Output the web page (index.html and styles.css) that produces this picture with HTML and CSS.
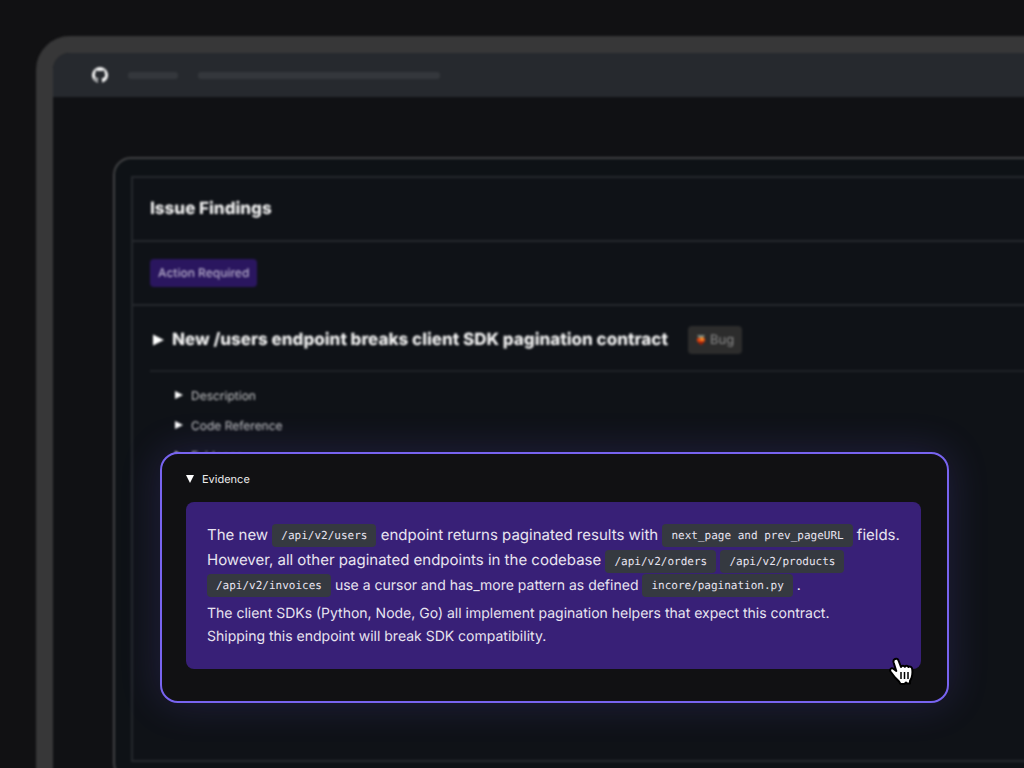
FILE: index.html
```
<!DOCTYPE html>
<html lang="en">
<head>
  <meta charset="UTF-8" />
  <meta name="viewport" content="width=device-width, initial-scale=1.0"/>
  <title>Issue Findings</title>
  <link rel="stylesheet" href="styles.css">
</head>
<body>
  <div class="window">
    <header class="topbar">
      <svg class="logo" viewBox="0 0 16 16" aria-hidden="true">
        <path fill="#f4f4f4" d="M8 0a8 8 0 0 0-2.53 15.59c.4.07.55-.17.55-.38l-.01-1.49c-2.01.37-2.53-.49-2.69-.94-.09-.23-.48-.94-.82-1.13-.28-.15-.68-.52-.01-.53.63-.01 1.08.58 1.23.82.72 1.21 1.87.87 2.33.66.07-.52.28-.87.51-1.07-1.78-.2-3.64-.89-3.64-3.95 0-.87.31-1.59.82-2.15-.08-.2-.36-1.02.08-2.12 0 0 .67-.21 2.2.82a7.5 7.5 0 0 1 4 0c1.53-1.04 2.2-.82 2.2-.82.44 1.1.16 1.92.08 2.12.51.56.82 1.27.82 2.15 0 3.07-1.87 3.75-3.65 3.95.29.25.54.73.54 1.48l-.01 2.2c0 .21.15.46.55.38A8 8 0 0 0 8 0z"/>
      </svg>
      <span class="bar bar-short"></span>
      <span class="bar bar-long"></span>
    </header>

    <main class="card">
      <section class="panel">
        <div class="row">
          <h1>Issue Findings</h1>
        </div>
        <div class="row">
          <span class="badge">Action Required</span>
        </div>
        <div class="issue">
          <div class="issue-title">
            <svg class="arrow-big" viewBox="0 0 12 12" aria-hidden="true"><path fill="#fff" d="M0 0l12 6-12 6z"/></svg>
            <h2>New /users endpoint breaks client SDK pagination contract</h2>
            <span class="tag">
              <svg class="bug" viewBox="0 0 10 10" aria-hidden="true">
                <path fill="#7d8a80" d="M1 0h8L7 3H3z"/>
                <path fill="#d9420f" d="M1 3h8v3L5 10 1 6z"/>
                <circle cx="6" cy="4" r="2" fill="#ee8a2a"/>
                <path fill="#8c1a08" d="M2 7h6L5 10z"/>
              </svg>
              Bug
            </span>
          </div>
          <details>
            <summary>Description</summary>
          </details>
          <details>
            <summary>Code Reference</summary>
          </details>
          <details>
            <summary>Evidence</summary>
          </details>
        </div>
      </section>
    </main>
  </div>

  <details class="popup" open>
    <summary>Evidence</summary>
    <div class="evidence">
      <p class="lead">
        The new <code>/api/v2/users</code> endpoint returns paginated results with <code>next_page and prev_pageURL</code> fields.<br>
        However, all other paginated endpoints in the codebase <code>/api/v2/orders</code> <code>/api/v2/products</code>
      </p>
      <p class="paths">
        <code>/api/v2/invoices</code> use a cursor and has_more pattern as defined <code>incore/pagination.py</code> .
      </p>
      <p>
        The client SDKs (Python, Node, Go) all implement pagination helpers that expect this contract.<br>
        Shipping this endpoint will break SDK compatibility.
      </p>
    </div>
    <svg class="cursor" viewBox="0 0 26 28" aria-hidden="true">
      <path fill="#fff" stroke="#000" stroke-width="2" stroke-linejoin="round" d="M6 2c1.500-.8 3 0 3.500 1.500l2.500 6.500c.5-1.500 3-1.800 3.800-.2 1-1.300 3-1.300 3.700.2 1.500-1 3.500 0 3.700 2 .5 3.500.4 6-.7 9l-1.500 3v2.500h-3l-1-1-1.500 1.500h-4l-1.500-2.500-4-4-4.500-6c-1.200-2 .8-4 2.800-2.800l3 2.300-2.700-8.500c-.4-1.500 0-3 1.400-3.500z"/>
      <path fill="none" stroke="#000" stroke-width="1.500" d="M12 15v7M15.500 15v7M19 15v7"/>
    </svg>
  </details>
</body>
</html>
```

FILE: styles.css
```
* {
  box-sizing: border-box;
}

body {
  font-family: Inter, sans-serif;
  text-rendering: geometricPrecision;
  background: #111113;
  color: #eee;
  margin: 0;
  padding: 36px 0 0 36px;
  height: 100vh;
  overflow: hidden;
  position: relative;
}

h1, h2, p {
  margin: 0;
}

.window {
  border: 17px solid #373738;
  border-radius: 34px;
  margin-right: -40px;
  background: #101114;
  overflow: hidden;
  filter: blur(1px);
}

.topbar {
  display: flex;
  align-items: center;
  height: 44px;
  padding-left: 39px;
  background: #26292e;
}

.logo {
  width: 16px;
  height: 16px;
}

.bar {
  height: 7px;
  border-radius: 3px;
  background: #34373c;
  margin-left: 20px;
}

.bar-short {
  width: 50px;
}

.bar-long {
  width: 242px;
}

.card {
  margin: 60px -20px 60px 60px;
  padding: 17px 16px;
  border: 2px solid #404143;
  border-radius: 18px;
  background: #0e1216;
}

.panel {
  border: 2px solid #25282d;
  background: #0f1217;
  min-height: 586px;
}

.row {
  display: flex;
  align-items: center;
  height: 64px;
  padding: 0 17px;
  border-bottom: 2px solid #25282d;
}

h1, h2 {
  font-size: 17px;
  font-weight: 800;
}

.badge {
  background: #2a165f;
  color: #b7aecb;
  font-size: 12px;
  font-weight: 500;
  line-height: 28px;
  padding: 0 8px;
  border-radius: 4px;
}

.issue {
  padding-left: 17px;
}

.issue-title {
  display: flex;
  align-items: center;
  height: 66px;
  padding: 4px 0 0 3px;
  margin-bottom: 8px;
  border-bottom: 2px solid #1f2227;
}

.arrow-big {
  width: 11px;
  height: 12px;
  margin-right: 8px;
}

.tag {
  display: flex;
  align-items: center;
  gap: 4px;
  height: 28px;
  margin-left: 20px;
  padding: 0 8px;
  border-radius: 4px;
  background: #2c2c2c;
  color: #8b8b8b;
  font-size: 13px;
}

.bug {
  width: 10px;
  height: 10px;
}

summary {
  display: flex;
  align-items: center;
  list-style: none;
  font-size: 12px;
}

summary::before {
  content: "";
  width: 8px;
  height: 8px;
  margin-right: 8px;
  background: #fff;
  clip-path: polygon(0 0, 100% 50%, 0 100%);
}

.issue summary {
  height: 30px;
  padding-left: 25px;
  color: #c4c5c7;
}

.popup {
  position: absolute;
  top: 452px;
  left: 160px;
  right: 75px;
  padding: 16px 26px 32px 24px;
  border: 2px solid #7864f0;
  border-radius: 18px;
  background: #111113;
  box-shadow: 0 0 40px rgba(112, 92, 230, 0.2);
}

.popup summary {
  height: 18px;
  font-size: 11px;
}

.popup summary::before {
  clip-path: polygon(0 0, 100% 0, 50% 100%);
}

.evidence {
  margin-top: 14px;
  padding: 20px 21px 21px;
  border-radius: 8px;
  background: #382077;
  color: #e8e4f0;
  font-size: 14px;
  line-height: 23px;
  white-space: nowrap;
}

.lead {
  font-size: 15px;
  line-height: 25px;
}

.paths {
  line-height: 25px;
  margin-bottom: 4px;
}

code {
  display: inline-block;
  vertical-align: middle;
  font-family: "DejaVu Sans Mono", monospace;
  font-size: 11px;
  line-height: 23px;
  padding: 0 9px;
  border-radius: 4px;
  background: #353940;
}

.cursor {
  position: absolute;
  right: 32px;
  bottom: 16px;
  width: 26px;
  height: 28px;
}
```
